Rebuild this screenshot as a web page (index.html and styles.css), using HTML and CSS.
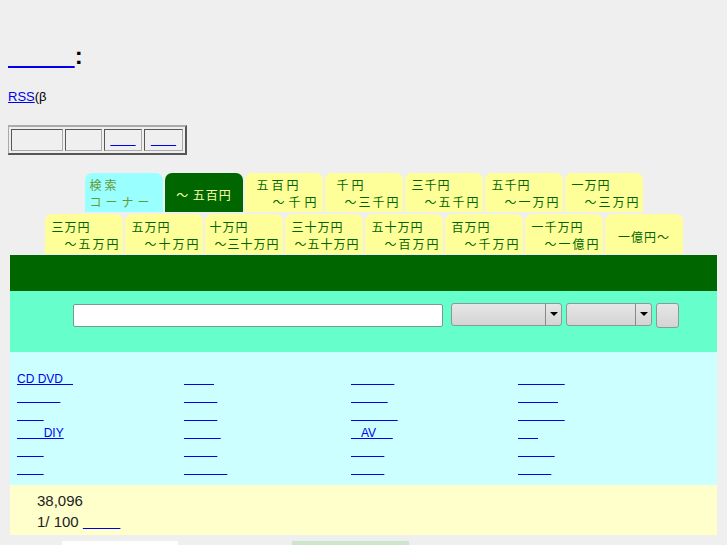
FILE: index.html
```html
<!DOCTYPE html>
<html lang="ja">
<head>
<meta charset="utf-8">
<title>検索</title>
<link rel="stylesheet" href="styles.css">
</head>
<body>
<h2 class="title"><a href="#">&nbsp;&nbsp;&nbsp;&nbsp;&nbsp;&nbsp;&nbsp;&nbsp;&nbsp;&nbsp;</a>:</h2>
<p class="rss"><a href="#">RSS</a>(β</p>
<table class="menu">
  <tr>
    <td class="c1">&nbsp;</td>
    <td class="c2">&nbsp;</td>
    <td class="c3"><a href="#">&nbsp;&nbsp;&nbsp;&nbsp;&nbsp;&nbsp;&nbsp;</a></td>
    <td class="c4"><a href="#">&nbsp;&nbsp;&nbsp;&nbsp;&nbsp;&nbsp;&nbsp;</a></td>
  </tr>
</table>

<div class="tabs">
  <div class="tabrow">
    <div class="tab cyan"><span class="l1 k1">検索</span><span class="l1 k2">コーナー</span></div>
    <div class="tab active"><span class="one">〜 五百円</span></div>
    <div class="tab"><span class="l1 sp">五百円</span><span class="l2 sp2">〜千円</span></div>
    <div class="tab"><span class="l1 sp">千円</span><span class="l2">〜三千円</span></div>
    <div class="tab"><span class="l1">三千円</span><span class="l2">〜五千円</span></div>
    <div class="tab"><span class="l1">五千円</span><span class="l2">〜一万円</span></div>
    <div class="tab"><span class="l1">一万円</span><span class="l2">〜三万円</span></div>
  </div>
  <div class="tabrow r2">
    <div class="tab"><span class="l1">三万円</span><span class="l2">〜五万円</span></div>
    <div class="tab"><span class="l1">五万円</span><span class="l2">〜十万円</span></div>
    <div class="tab"><span class="l1 tight">十万円</span><span class="l2 five">〜三十万円</span></div>
    <div class="tab"><span class="l1">三十万円</span><span class="l2 five">〜五十万円</span></div>
    <div class="tab"><span class="l1">五十万円</span><span class="l2">〜百万円</span></div>
    <div class="tab"><span class="l1">百万円</span><span class="l2">〜千万円</span></div>
    <div class="tab"><span class="l1">一千万円</span><span class="l2">〜一億円</span></div>
    <div class="tab"><span class="one">一億円〜</span></div>
  </div>
</div>

<div class="main">
  <div class="bar"></div>
  <div class="search">
    <div class="input"></div>
    <div class="select s1"><span class="arrow"></span></div>
    <div class="select s2"><span class="arrow"></span></div>
    <div class="btn"></div>
  </div>
  <div class="cats">
    <div class="col">
      <a href="#">CD DVD&nbsp;&nbsp;&nbsp;</a>
      <a href="#">&nbsp;&nbsp;&nbsp;&nbsp;&nbsp;&nbsp;&nbsp;&nbsp;&nbsp;&nbsp;&nbsp;&nbsp;&nbsp;</a>
      <a href="#">&nbsp;&nbsp;&nbsp;&nbsp;&nbsp;&nbsp;&nbsp;&nbsp;</a>
      <a href="#">&nbsp;&nbsp;&nbsp;&nbsp;&nbsp;&nbsp;&nbsp;&nbsp;DIY</a>
      <a href="#">&nbsp;&nbsp;&nbsp;&nbsp;&nbsp;&nbsp;&nbsp;&nbsp;</a>
      <a href="#">&nbsp;&nbsp;&nbsp;&nbsp;&nbsp;&nbsp;&nbsp;&nbsp;</a>
    </div>
    <div class="col">
      <a href="#">&nbsp;&nbsp;&nbsp;&nbsp;&nbsp;&nbsp;&nbsp;&nbsp;&nbsp;</a>
      <a href="#">&nbsp;&nbsp;&nbsp;&nbsp;&nbsp;&nbsp;&nbsp;&nbsp;&nbsp;&nbsp;</a>
      <a href="#">&nbsp;&nbsp;&nbsp;&nbsp;&nbsp;&nbsp;&nbsp;&nbsp;&nbsp;&nbsp;</a>
      <a href="#">&nbsp;&nbsp;&nbsp;&nbsp;&nbsp;&nbsp;&nbsp;&nbsp;&nbsp;&nbsp;&nbsp;</a>
      <a href="#">&nbsp;&nbsp;&nbsp;&nbsp;&nbsp;&nbsp;&nbsp;&nbsp;&nbsp;&nbsp;</a>
      <a href="#">&nbsp;&nbsp;&nbsp;&nbsp;&nbsp;&nbsp;&nbsp;&nbsp;&nbsp;&nbsp;&nbsp;&nbsp;&nbsp;</a>
    </div>
    <div class="col">
      <a href="#">&nbsp;&nbsp;&nbsp;&nbsp;&nbsp;&nbsp;&nbsp;&nbsp;&nbsp;&nbsp;&nbsp;&nbsp;&nbsp;</a>
      <a href="#">&nbsp;&nbsp;&nbsp;&nbsp;&nbsp;&nbsp;&nbsp;&nbsp;&nbsp;&nbsp;&nbsp;</a>
      <a href="#">&nbsp;&nbsp;&nbsp;&nbsp;&nbsp;&nbsp;&nbsp;&nbsp;&nbsp;&nbsp;&nbsp;&nbsp;&nbsp;&nbsp;</a>
      <a href="#">&nbsp;&nbsp;&nbsp;AV&nbsp;&nbsp;&nbsp;&nbsp;&nbsp;</a>
      <a href="#">&nbsp;&nbsp;&nbsp;&nbsp;&nbsp;&nbsp;&nbsp;&nbsp;&nbsp;&nbsp;</a>
      <a href="#">&nbsp;&nbsp;&nbsp;&nbsp;&nbsp;&nbsp;&nbsp;&nbsp;&nbsp;&nbsp;</a>
    </div>
    <div class="col">
      <a href="#">&nbsp;&nbsp;&nbsp;&nbsp;&nbsp;&nbsp;&nbsp;&nbsp;&nbsp;&nbsp;&nbsp;&nbsp;&nbsp;&nbsp;</a>
      <a href="#">&nbsp;&nbsp;&nbsp;&nbsp;&nbsp;&nbsp;&nbsp;&nbsp;&nbsp;&nbsp;&nbsp;&nbsp;</a>
      <a href="#">&nbsp;&nbsp;&nbsp;&nbsp;&nbsp;&nbsp;&nbsp;&nbsp;&nbsp;&nbsp;&nbsp;&nbsp;&nbsp;&nbsp;</a>
      <a href="#">&nbsp;&nbsp;&nbsp;&nbsp;&nbsp;&nbsp;</a>
      <a href="#">&nbsp;&nbsp;&nbsp;&nbsp;&nbsp;&nbsp;&nbsp;&nbsp;&nbsp;&nbsp;&nbsp;</a>
      <a href="#">&nbsp;&nbsp;&nbsp;&nbsp;&nbsp;&nbsp;&nbsp;&nbsp;&nbsp;&nbsp;</a>
    </div>
  </div>
  <div class="count">
    <div>38,096</div>
    <div>1/ 100 <a href="#">&nbsp;&nbsp;&nbsp;&nbsp;&nbsp;&nbsp;&nbsp;&nbsp;&nbsp;</a></div>
  </div>
</div>
<div class="foot">
  <div class="fbox white"></div>
  <div class="fbox green"></div>
</div>
</body>
</html>
```

FILE: styles.css
```css
html, body {
  background: #efefef;
}
body {
  margin: 8px;
  font-family: "Liberation Sans", Arial, "Noto Sans CJK JP", sans-serif;
  color: #000;
}
a {
  color: #0000ee;
}
.title {
  margin: 34px 0 0;
  font-size: 24px;
  font-weight: bold;
  line-height: 28px;
}
.title a {
  font-weight: normal;
}
.rss {
  margin: 19px 0 0;
  font-size: 13px;
  line-height: 15px;
}
.menu {
  margin-top: 21px;
  margin-left: -1px;
  border: 2px outset #aaa;
  border-spacing: 2px;
  font-size: 13px;
}
.menu td {
  border: 1px inset #aaa;
  padding: 3px 1px;
  text-align: center;
  line-height: 14px;
}
.menu .c1 { width: 48px; }
.menu .c2 { width: 33px; }
.menu .c3 { width: 34px; }
.menu .c4 { width: 35px; }

.tabs {
  margin-top: 18px;
  display: flex;
  flex-direction: column;
  align-items: center;
  gap: 2px;
}
.tabrow {
  display: flex;
  gap: 2px;
}
.tab {
  width: 78px;
  height: 39px;
  box-sizing: border-box;
  background: #ffff99;
  border-radius: 7px 7px 0 0;
  padding: 3px 4px 0 5px;
  display: flex;
  flex-direction: column;
  font-family: "Noto Sans CJK JP", "Noto Sans CJK SC", sans-serif;
  font-size: 12px;
  line-height: 17px;
  color: #006600;
  white-space: nowrap;
}
.r2 .tab {
  height: 40px;
  padding-top: 4px;
}
.tab .l1 {
  align-self: flex-start;
  padding-left: 2px;
  letter-spacing: 1px;
}
.tab .l1.sp {
  padding-left: 7px;
  letter-spacing: 3px;
}
.tab .l1.tight {
  padding-left: 0;
}
.tab .l2 {
  align-self: flex-end;
  letter-spacing: 2px;
  margin-right: -2px;
}
.tab .l2.sp2 {
  letter-spacing: 4px;
}
.tab .l2.five {
  letter-spacing: 1px;
  margin-right: -1px;
}
.tab .one {
  margin: auto;
  letter-spacing: 1px;
}
.tab.cyan {
  background: #99ffff;
  color: #669933;
}
.tab.cyan .l1 {
  padding-left: 0;
}
.tab.cyan .k1 {
  letter-spacing: 3px;
}
.tab.cyan .k2 {
  letter-spacing: 4px;
}
.tab.active {
  background: #006600;
  color: #ffffaa;
}

.main {
  margin: 1px 2px 0;
}
.bar {
  height: 36px;
  background: #006600;
}
.search {
  height: 61px;
  background: #66ffcc;
  display: flex;
  align-items: flex-start;
  padding: 12px 0 0 63px;
  box-sizing: border-box;
}
.input {
  width: 370px;
  height: 23px;
  margin-top: 1px;
  box-sizing: border-box;
  background: #fff;
  border: 1px solid #7a9a8a;
  border-radius: 2px;
}
.select {
  position: relative;
  height: 23px;
  box-sizing: border-box;
  border: 1px solid #8a9a94;
  border-radius: 3px;
  background: linear-gradient(#e6e6e6, #d4d4d4);
  margin-left: 8px;
}
.select.s1 { width: 111px; }
.select.s2 { width: 86px; margin-left: 4px; }
.arrow {
  position: absolute;
  right: 0;
  top: 0;
  bottom: 0;
  width: 15px;
  border-left: 1px solid #8a8a8a;
}
.arrow::after {
  content: "";
  position: absolute;
  left: 4px;
  top: 8px;
  border-left: 4px solid transparent;
  border-right: 4px solid transparent;
  border-top: 4px solid #000;
}
.btn {
  width: 23px;
  height: 25px;
  box-sizing: border-box;
  margin-left: 4px;
  border: 1px solid #8a9a94;
  border-radius: 3px;
  background: linear-gradient(#e6e6e6, #d4d4d4);
}

.cats {
  background: #ccffff;
  padding: 18px 0 7px 7px;
  display: grid;
  grid-template-columns: repeat(4, 167px);
  font-size: 12px;
  line-height: 18px;
}
.col {
  display: flex;
  flex-direction: column;
  align-items: flex-start;
}

.count {
  background: #ffffcc;
  padding: 5px 0 0 27px;
  font-size: 15px;
  line-height: 21px;
  height: 50px;
  box-sizing: border-box;
  color: #222;
}

.foot {
  margin-top: 6px;
  display: flex;
  height: 10px;
}
.fbox {
  height: 10px;
}
.fbox.white {
  width: 116px;
  margin-left: 54px;
  background: #fff;
}
.fbox.green {
  width: 117px;
  margin-left: 114px;
  background: #cde5cd;
}
```
